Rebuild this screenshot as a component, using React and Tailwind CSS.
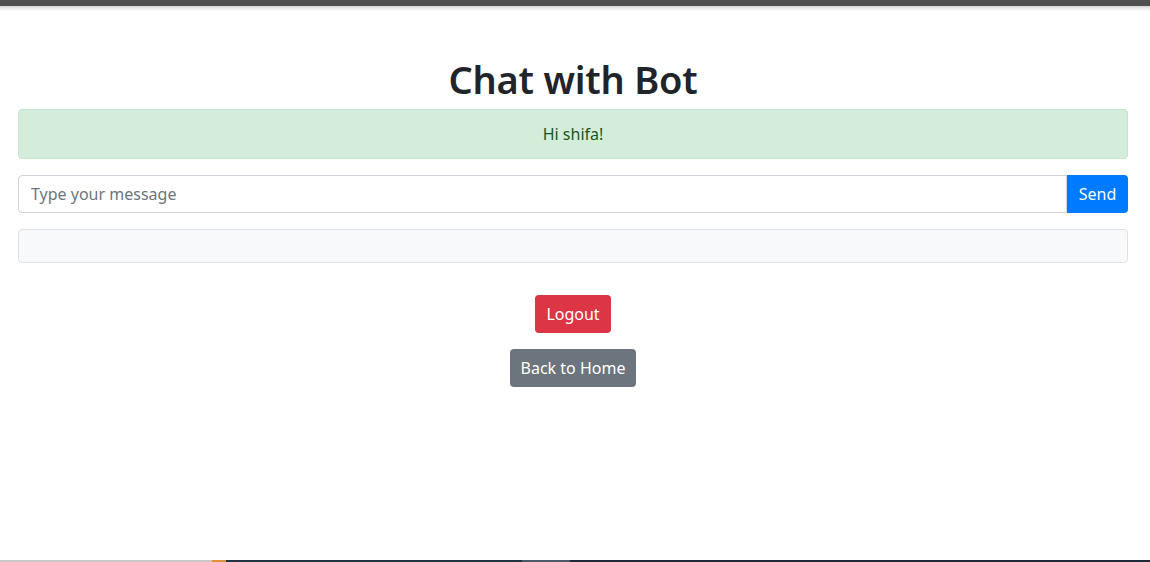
export default function App() {
  return (
    <div className="relative min-h-[562px] bg-white text-[#212529]">
      <div className="h-[6px] bg-[#4f4f4f]" />
      <div className="h-[5px] bg-gradient-to-b from-[#d6d6d6] to-white" />

      <main className="ml-[18px] w-[1110px] pt-[42px] font-['Noto_Sans',sans-serif]">
        <h1 className="mb-[6px] pt-[2px] text-center text-[38px] font-semibold leading-[48px] tracking-[-0.2px]">Chat with Bot</h1>

        <div className="mb-4 rounded border border-[#c3e6cb] bg-[#d4edda] px-5 py-3 text-center text-base leading-6 text-[#155724]">
          Hi shifa!
        </div>

        <div className="mb-4 flex h-[38px]">
          <input
            type="text"
            placeholder="Type your message"
            className="flex-1 rounded-l border border-[#ced4da] px-3 text-base text-[#495057] outline-none placeholder:text-[#6c757d]"
          />
          <button
            type="button"
            className="w-[61px] rounded-r bg-[#007bff] text-base text-white"
          >
            Send
          </button>
        </div>

        <div className="h-[34px] rounded border border-[#dee2e6] bg-[#f8f9fa]" />

        <div className="mt-8 flex flex-col items-center gap-4">
          <button
            type="button"
            className="h-[38px] rounded bg-[#dc3545] px-[11px] text-base text-white"
          >
            Logout
          </button>
          <button
            type="button"
            className="h-[38px] rounded bg-[#6c757d] px-[11px] text-base text-white"
          >
            Back to Home
          </button>
        </div>
      </main>

      <div className="absolute bottom-0 left-0 flex h-[2px] w-full">
        <div className="w-[212px] bg-[#c8c8c8]" />
        <div className="w-[14px] bg-[#e0913a]" />
        <div className="w-[296px] bg-[#1f3340]" />
        <div className="w-[48px] bg-[#4a5a66]" />
        <div className="flex-1 bg-[#1c2a3a]" />
      </div>
    </div>
  );
}
